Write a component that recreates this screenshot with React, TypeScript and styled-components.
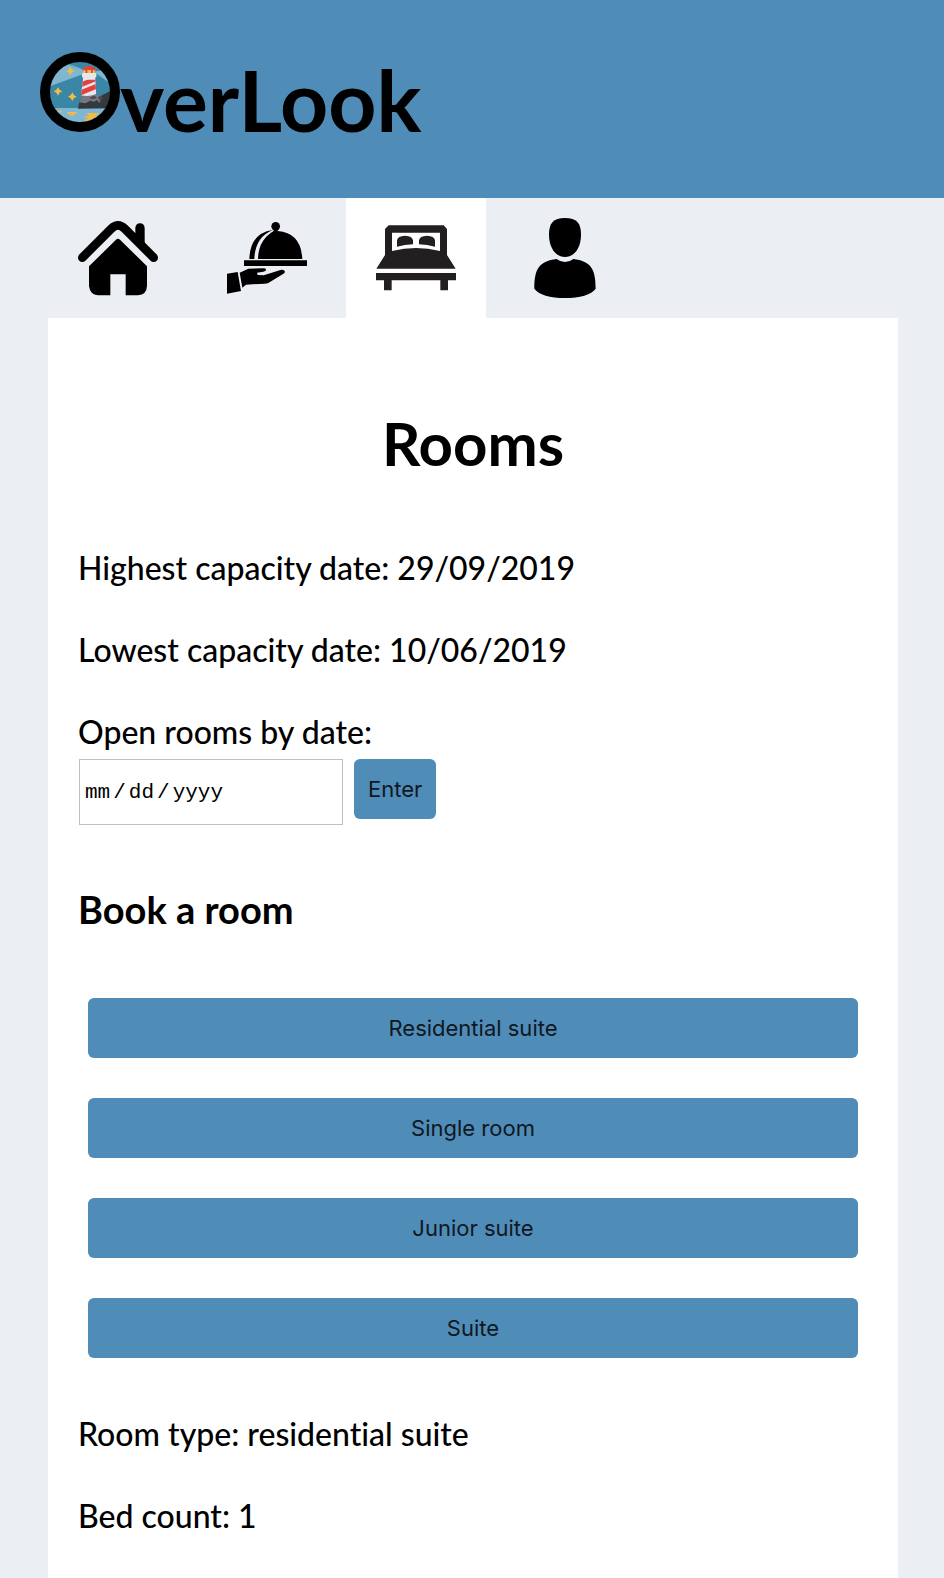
import React from "react";
import styled, { createGlobalStyle } from "styled-components";

const BLUE = "#4f8cb8";

const GlobalStyle = createGlobalStyle`
  *, *::before, *::after { box-sizing: border-box; }
  body {
    margin: 0;
    background: #ebeff4;
    color: #000;
    font-family: "Trebuchet MS", Lato, "Liberation Sans", sans-serif;
    font-variant-ligatures: none;
  }
`;

const Page = styled.div`
  display: flex;
  flex-direction: column;
  min-height: 100vh;
`;

const Header = styled.header`
  padding: 50px 40px 48px;
  background: ${BLUE};
`;

const Brand = styled.h1`
  display: flex;
  align-items: baseline;
  margin: 0;
  font-size: 84px;
  line-height: 100px;
  font-weight: 700;
`;

const BrandMark = styled.svg`
  flex: none;
  width: 80px;
  height: 80px;
`;

const TabBar = styled.nav`
  display: flex;
  gap: 9px;
  padding: 0 46px 0 48px;
`;

const Tab = styled.button<{ $active?: boolean }>`
  display: flex;
  align-items: center;
  justify-content: center;
  width: 140px;
  height: 120px;
  padding: 0;
  border: 0;
  background: ${(p) => (p.$active ? "#fff" : "transparent")};
  color: ${(p) => (p.$active ? "#231f20" : "#000")};
  cursor: pointer;
`;

const TabIcon = styled.svg`
  width: 80px;
  height: 80px;
  fill: currentColor;
`;

const Main = styled.main`
  flex: 1;
  margin: 0 46px 0 48px;
  padding: 89px 30px 44px;
  background: #fff;
`;

const Title = styled.h2`
  margin: 0 0 70px;
  font-size: 60px;
  line-height: 72px;
  font-weight: 700;
  text-align: center;
`;

const Facts = styled.div`
  display: flex;
  flex-direction: column;
  gap: 44px;
`;

const Fact = styled.p`
  margin: 0;
  font-size: 32px;
  line-height: 38px;
  font-weight: 500;
`;

const DateForm = styled.form`
  margin-bottom: 61px;
`;

const DateLabel = styled.label`
  display: block;
  margin: 44px 0 8px;
  font-size: 32px;
  line-height: 38px;
  font-weight: 500;
`;

const DateRow = styled.div`
  display: flex;
  align-items: flex-start;
  gap: 11px;
  padding: 0 1px;
`;

const DateInput = styled.input`
  width: 264px;
  height: 66px;
  padding: 0 4px;
  border: 1px solid #bfbfbf;
  border-radius: 0;
  background: #fff;
  color: #000;
  font-family: "Courier New", "Liberation Mono", monospace;
  font-size: 21px;

  &::-webkit-datetime-edit-text {
    padding: 0 2px;
  }
  &::-webkit-calendar-picker-indicator {
    display: none;
  }
`;

const ActionButton = styled.button`
  height: 60px;
  padding: 0 14px;
  border: 0;
  border-radius: 6px;
  background: ${BLUE};
  color: #10181f;
  font-family: Inter, "Liberation Sans", sans-serif;
  font-size: 22px;
  cursor: pointer;
`;

const SectionTitle = styled.h3`
  margin: 0 0 66px;
  font-size: 38px;
  line-height: 46px;
  font-weight: 700;
`;

const RoomTypes = styled.div`
  display: flex;
  flex-direction: column;
  gap: 40px;
  margin: 0 10px 57px;
`;

const roomTypes = ["Residential suite", "Single room", "Junior suite", "Suite"];

function Star({ x, y }: { x: number; y: number }) {
  return (
    <path
      transform={`translate(${x} ${y})`}
      d="M0-13Q3-3 13 0Q3 3 0 13Q-3 3-13 0Q-3-3 0-13Z"
      fill="#f6bb42"
    />
  );
}

function Lighthouse() {
  return (
    <BrandMark viewBox="30 36 240 240" role="img" aria-label="O">
      <defs>
        <clipPath id="lens">
          <circle cx="150" cy="156" r="92" />
        </clipPath>
        <clipPath id="tower">
          <path d="M160 110H195L199 162Q176 172 153 166Z" />
        </clipPath>
      </defs>
      <g clipPath="url(#lens)">
        <path d="M55 60H245V250H55Z" fill="#3a86a5" />
        <path d="M50 145V90L100 66L160 95V102L60 139ZM110 68L160 89V96ZM195 96L245 68V132Z" fill="#7fb6d1" />
        <path d="M135 62H245V88L196 94L160 92Z" fill="#3a86a5" />
        <path d="M195 98L212 93L240 108V130Z" fill="#7fb6d1" />
        <path d="M50 204H245V255H50Z" fill="#7fb6d1" />
        <path d="M144 206L149 180L175 168L212 168L242 152V205Z" fill="#32393f" />
        <path d="M146 187L157 169L176 163L210 166L216 176L208 188L200 180L193 185L180 182L167 190Z" fill="#77777d" />
        <path d="M178 174L192 167L201 174L188 177ZM204 171L214 167L219 174L211 185Z" fill="#444950" />
        <g clipPath="url(#tower)">
          <path d="M150 105H202V175H150Z" fill="#e6e7ec" />
          <path d="M150 128L202 107V122L150 143ZM150 151L202 130V146L150 167Z" fill="#e2423f" />
          <path d="M157 108H198V119H157Z" fill="#e6e7ec" />
        </g>
        <path d="M159 88H196V101H159Z" fill="#f6bb42" />
        <path d="M159 92Q160 78 178 77Q195 78 196 92L188 90V101H183V90H172V101H167V90Z" fill="#e2423f" />
        <rect x="156" y="99" width="43" height="14" rx="4" fill="#e6e7ec" />
        <Star x={121} y={93} />
        <Star x={84} y={154} />
        <Star x={127} y={170} />
        <path
          d="M80 213H92Q99 215 92 217H80ZM113 216H138Q145 219 137 221H115Q107 219 113 216ZM119 223H133Q137 225 132 227H119Q115 225 119 223ZM174 219H205V224H198V229H204V233H189V238H178V242H164V238H172V233H163V229H176V225H170Z"
          fill="#f6bb42"
        />
      </g>
      <circle cx="150" cy="156" r="105" fill="none" stroke="#000" strokeWidth="30" />
    </BrandMark>
  );
}

function HomeIcon() {
  return (
    <TabIcon viewBox="54 54 240 240" aria-hidden="true">
      <path d="M67 173L154 86Q174 66 194 86L281 173" fill="none" stroke="currentColor" strokeWidth="26" strokeLinecap="round" strokeLinejoin="round" />
      <path d="M226 84Q227 70 240 70Q253 70 254 84V131L226 104Z" />
      <path d="M168 119Q174 113 180 119L261 199V258Q260 284 234 286H197V223H151V286H114Q90 284 87 258V199Z" />
    </TabIcon>
  );
}

function ServiceIcon() {
  return (
    <TabIcon viewBox="48 54 240 240" aria-hidden="true">
      <circle cx="194" cy="79" r="13" />
      <path d="M188 88H200V93Q270 98 274 177H141Q142 120 188 93Z" />
      <path d="M185 90Q118 99 115 177H130Q132 112 185 90Z" />
      <path d="M99 181H288V198H99Z" />
      <path d="M48 221L80 216L90 273L48 281Z" />
      <path d="M86 218L112 206L160 205Q166 206 165 211Q164 214 157 215L138 218L140 225L158 226L211 209Q220 208 222 215Q221 220 215 223L172 249Q168 251 160 251L105 254L94 263Z" />
    </TabIcon>
  );
}

function BedIcon() {
  return (
    <TabIcon viewBox="108 84 240 240" aria-hidden="true">
      <path
        fillRule="evenodd"
        d="M146 106H311L321 117V195L347 236H109L135 195V117ZM156 128V183Q228 165 300 183V128Z"
      />
      <path d="M171 170V151Q173 138 195 137Q217 138 219 151V163Q194 164 171 170ZM237 163V151Q239 138 261 137Q283 138 285 151V170Q262 164 237 163Z" />
      <path d="M108 249H348V271H324V301H301V271H155V301H132V271H108Z" />
    </TabIcon>
  );
}

function PersonIcon() {
  return (
    <TabIcon viewBox="48 54 240 240" aria-hidden="true">
      <path d="M168 54C203 54 216 69 216 104C216 143 196 171 168 171C140 171 120 143 120 104C120 69 133 54 168 54Z" />
      <path d="M143 177Q154 186 168 186Q182 186 193 177C244 184 260 204 260 266C248 284 212 294 168 294C124 294 88 284 76 266C76 204 92 184 143 177Z" />
    </TabIcon>
  );
}

export default function App() {
  return (
    <>
      <GlobalStyle />
      <Page>
        <Header>
          <Brand>
            <Lighthouse />
            verLook
          </Brand>
        </Header>
        <TabBar aria-label="Sections">
          <Tab type="button" aria-label="Home"><HomeIcon /></Tab>
          <Tab type="button" aria-label="Room service"><ServiceIcon /></Tab>
          <Tab type="button" aria-label="Rooms" aria-current="page" $active><BedIcon /></Tab>
          <Tab type="button" aria-label="Guests"><PersonIcon /></Tab>
        </TabBar>
        <Main>
          <Title>Rooms</Title>
          <Facts>
            <Fact>Highest capacity date: 29/09/2019</Fact>
            <Fact>Lowest capacity date: 10/06/2019</Fact>
          </Facts>
          <DateForm onSubmit={(e) => e.preventDefault()}>
            <DateLabel htmlFor="open-date">Open rooms by date:</DateLabel>
            <DateRow>
              <DateInput id="open-date" type="date" />
              <ActionButton type="submit">Enter</ActionButton>
            </DateRow>
          </DateForm>
          <SectionTitle>Book a room</SectionTitle>
          <RoomTypes>
            {roomTypes.map((name) => (
              <ActionButton key={name} type="button">{name}</ActionButton>
            ))}
          </RoomTypes>
          <Facts>
            <Fact>Room type: residential suite</Fact>
            <Fact>Bed count: 1</Fact>
          </Facts>
        </Main>
      </Page>
    </>
  );
}
